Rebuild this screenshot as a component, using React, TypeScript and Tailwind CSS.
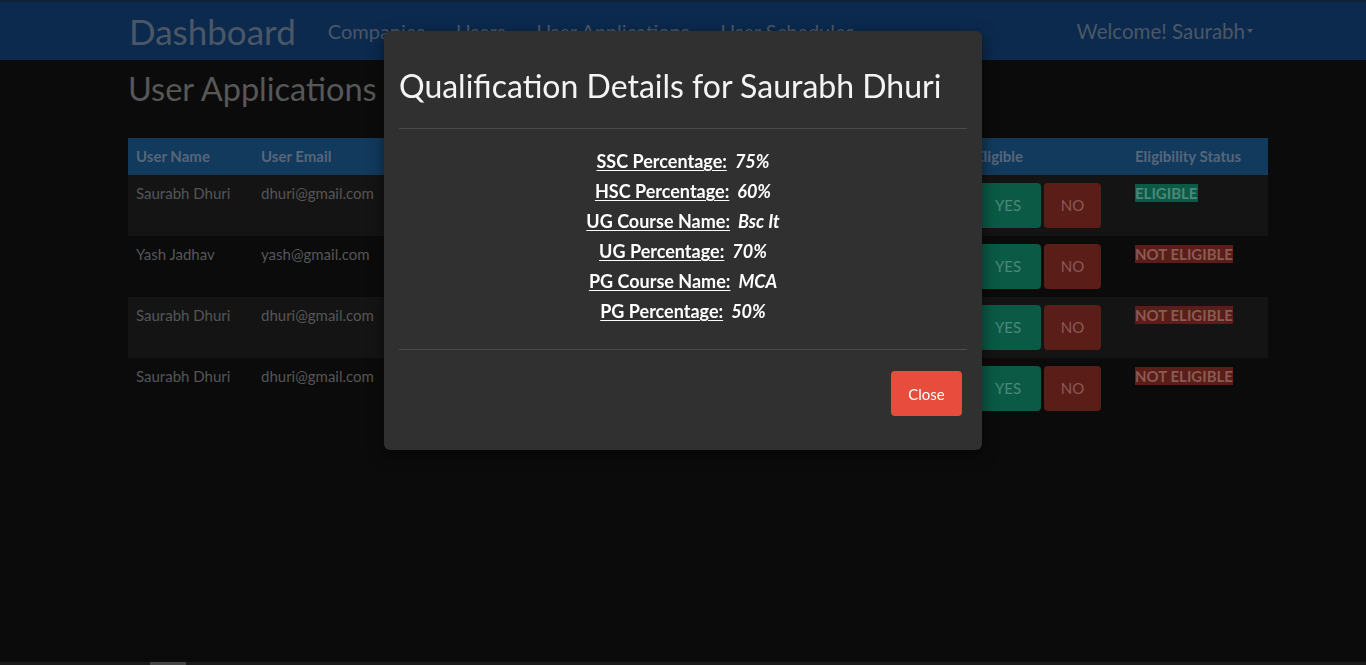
import React from 'react'

const rows = [
  { name: 'Saurabh Dhuri', email: 'dhuri@gmail.com', eligible: true },
  { name: 'Yash Jadhav', email: 'yash@gmail.com', eligible: false },
  { name: 'Saurabh Dhuri', email: 'dhuri@gmail.com', eligible: false },
  { name: 'Saurabh Dhuri', email: 'dhuri@gmail.com', eligible: false },
]

const details = [
  ['SSC Percentage:', '75%'],
  ['HSC Percentage:', '60%'],
  ['UG Course Name:', 'Bsc It'],
  ['UG Percentage:', '70%'],
  ['PG Course Name:', 'MCA'],
  ['PG Percentage:', '50%'],
]

function Navbar() {
  return (
    <nav className="h-[60px] border-t-2 border-[#0f1f36] bg-[#0b2a4e]">
      <div className="ml-[129px] mr-[113px] flex h-full items-center">
        <span className="text-[35px] text-[#4b5766]">Dashboard</span>
        <ul className="ml-[32px] flex gap-[31px] text-[20px] text-[#4b5766]">
          <li>Companies</li>
          <li>Users</li>
          <li>User Applications</li>
          <li>User Schedules</li>
        </ul>
        <span className="ml-auto flex items-center text-[20.5px] text-[#4b5766]">
          Welcome! Saurabh
          <span className="ml-[2px] border-x-[3px] border-t-[4px] border-x-transparent border-t-[#4b5766]" />
        </span>
      </div>
    </nav>
  )
}

function Table() {
  return (
    <table className="w-[1140px] border-collapse text-[15px]">
      <thead>
        <tr className="h-[37px] bg-[#123a5d] text-left font-bold text-[#56667a]">
          <th className="w-[125px] px-2">User Name</th>
          <th className="w-[150px] px-2">User Email</th>
          <th className="w-[150px] px-2">Qualification</th>
          <th className="w-[150px] px-2">Resume</th>
          <th className="w-[150px] px-2">Company</th>
          <th className="w-[114px] px-2">Applied For</th>
          <th className="w-[160px] px-2">Eligible</th>
          <th className="px-2">Eligibility Status</th>
        </tr>
      </thead>
      <tbody>
        {rows.map((r, i) => (
          <tr key={i} className={i % 2 === 0 ? 'h-[61px] bg-[#141414]' : 'h-[61px] bg-[#0b0b0b]'}>
            <td className="px-2 pt-[7px] align-top text-[#565656]">{r.name}</td>
            <td className="px-2 pt-[7px] align-top text-[#565656]">{r.email}</td>
            <td className="px-2" />
            <td className="px-2" />
            <td className="px-2" />
            <td className="px-2" />
            <td className="px-2 py-2 align-top">
              <div className="flex gap-[3px]">
                <span className="flex h-[45px] w-[66px] items-center justify-center rounded-[4px] bg-[#0a5a45] text-[#4e8779]">
                  YES
                </span>
                <span className="flex h-[45px] w-[57px] items-center justify-center rounded-[4px] bg-[#5b1d17] text-[#8a5a54]">
                  NO
                </span>
              </div>
            </td>
            <td className="px-2 pt-[7px] align-top">
              {r.eligible ? (
                <span className="bg-[#0a5a45] font-bold text-[#4e8779]">ELIGIBLE</span>
              ) : (
                <span className="bg-[#5b1d17] font-bold text-[#8a5a54]">NOT ELIGIBLE</span>
              )}
            </td>
          </tr>
        ))}
      </tbody>
    </table>
  )
}

function Modal() {
  return (
    <div className="fixed inset-0 flex justify-center pt-[31px]">
      <div className="h-fit w-[598px] rounded-[6px] bg-[#303030] shadow-[0_5px_15px_rgba(0,0,0,0.5)]">
        <div className="mx-[15px] border-b border-[#4a4a4a] pt-[36px] pb-[23px]">
          <h2 className="text-[32px] leading-[1.2] text-[#f4f4f4]">Qualification Details for Saurabh Dhuri</h2>
        </div>
        <div className="mx-[15px] flex flex-col items-center border-b border-[#4a4a4a] pt-[17px] pb-[23px] text-[18px] font-bold leading-[30px] text-white">
          {details.map(([k, v]) => (
            <p key={k}>
              <span className="underline underline-offset-2">{k}</span>
              <span className="ml-[8px] italic">{v}</span>
            </p>
          ))}
        </div>
        <div className="flex justify-end px-[20px] pt-[21px] pb-[34px]">
          <button className="h-[45px] w-[71px] rounded-[4px] bg-[#e74c3c] text-[15px] text-white">Close</button>
        </div>
      </div>
    </div>
  )
}

export default function App() {
  return (
    <main className="min-h-[665px] bg-[#0b0b0b] font-['Lato',sans-serif]">
      <Navbar />
      <div className="ml-[128px]">
        <h1 className="pt-[9px] pb-[30px] text-[32.5px] leading-[1.2] text-[#575757]">User Applications</h1>
        <Table />
      </div>
      <Modal />
      <div className="fixed inset-x-0 bottom-0 h-[3px] bg-[#1a1a1a]">
        <div className="ml-[150px] h-full w-[36px] bg-[#454545]" />
      </div>
    </main>
  )
}
